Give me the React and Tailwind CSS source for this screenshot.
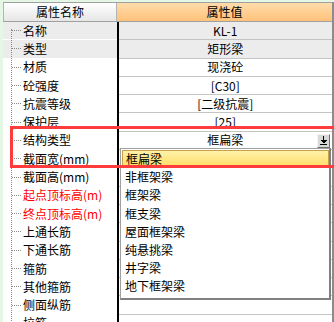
const rows = [
  { name: "名称", value: "KL-1", gray: true },
  { name: "类型", value: "矩形梁", gray: true },
  { name: "材质", value: "现浇砼" },
  { name: "砼强度", value: "[C30]" },
  { name: "抗震等级", value: "[二级抗震]" },
  { name: "保护层", value: "[25]" },
  { name: "结构类型", value: "框扁梁", select: true },
  { name: "截面宽(mm)", value: "" },
  { name: "截面高(mm)", value: "" },
  { name: "起点顶标高(m)", value: "", red: true },
  { name: "终点顶标高(m)", value: "", red: true },
  { name: "上通长筋", value: "" },
  { name: "下通长筋", value: "" },
  { name: "箍筋", value: "" },
  { name: "其他箍筋", value: "" },
  { name: "侧面纵筋", value: "" },
  { name: "拉筋", value: "" },
];

const options = ["框扁梁", "非框架梁", "框架梁", "框支梁", "屋面框架梁", "纯悬挑梁", "井字梁", "地下框架梁"];

function DropButton() {
  return (
    <div className="flex h-[14px] w-[13px] items-center justify-center border border-t-[#f4f4f4] border-l-[#f4f4f4] border-r-[#707070] border-b-[#707070] bg-[#d8d8d8]">
      <svg width="9" height="10" viewBox="0 0 9 10" shapeRendering="crispEdges">
        <rect x="4" y="0" width="1" height="4" fill="#000" />
        <polygon points="1,4 8,4 4.5,7.5" fill="#000" />
        <rect x="1" y="8" width="7" height="1" fill="#000" />
      </svg>
    </div>
  );
}

export default function App() {
  return (
    <div
      className="relative h-[322px] w-[334px] overflow-hidden bg-[#e4f6e4] pl-[3px] pt-[2px] text-[12px] leading-none text-black"
      style={{ fontFamily: '"Noto Sans CJK SC", "Liberation Sans", sans-serif' }}
    >
      <div className="relative h-full w-[331px] border-r-2 border-[#8c8c8c] bg-white">
        {/* header */}
        <div className="flex h-[20px] border-t border-b border-[#a0a0a0]">
          <div className="flex w-[114px] items-center justify-center border-l border-r border-[#b4b4b4] bg-gradient-to-b from-[#ffffff] to-[#e6e6e6]">
            属性名称
          </div>
          <div className="flex flex-1 items-center justify-center bg-gradient-to-b from-[#ffdcaa] to-[#ffc27a]">
            属性值
          </div>
        </div>

        {/* tree line */}
        <div className="absolute left-[8px] top-[27px] h-[300px] border-l border-dotted border-[#8a8a8a]" />

        {rows.map((r, i) => (
          <div key={i} className="flex h-[18.3px]">
            <div
              className={`flex w-[114px] items-center gap-[2px] border-b ${
                r.gray ? "border-white bg-[#ececec]" : "border-white bg-white"
              }`}
            >
              <span className="ml-[9px] w-[9px] border-t border-dotted border-[#8a8a8a]" />
              <span className={r.red ? "text-[#ff0000]" : ""}>{r.name}</span>
            </div>
            <div className="w-[1.5px] bg-black" />
            <div
              className={`relative flex flex-1 items-center justify-center border-b border-[#c4c4c4] ${
                r.gray ? "bg-[#ececec]" : "bg-white"
              }`}
            >
              {r.value}
              {r.select && (
                <div className="absolute right-[2px] top-[2px]">
                  <DropButton />
                </div>
              )}
            </div>
          </div>
        ))}

        {/* dropdown list */}
        <div className="absolute left-[117px] top-[146px] h-[152px] w-[211px] border-l border-t border-[#a0a0a0] border-r-2 border-b-2 border-r-[#808080] border-b-[#808080] bg-white pl-[1px] pt-[1px]">
          {options.map((o, i) => (
            <div
              key={o}
              className={`flex h-[18.2px] items-center pl-[3px] ${
                i === 0 ? "border border-[#c8a050] bg-gradient-to-b from-[#fff2a8] to-[#ffdc60] pl-[2px]" : ""
              }`}
            >
              {o}
            </div>
          ))}
        </div>
      </div>

      {/* red highlight frame */}
      <div className="absolute left-[10px] top-[126px] h-[42px] w-[330px] border-[3px] border-[#ff3b3b]" />
    </div>
  );
}
